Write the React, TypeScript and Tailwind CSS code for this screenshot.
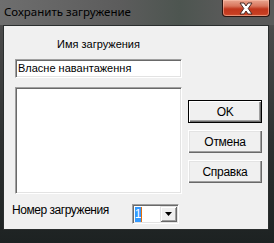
import React from "react";

const sunken =
  "border border-t-[#a0a0a0] border-l-[#a0a0a0] border-b-[#ffffff] border-r-[#ffffff] shadow-[inset_1px_1px_0_#696969,inset_-1px_-1px_0_#e3e3e3]";

function Btn({ label, def }: { label: string; def?: boolean }) {
  return (
    <div
      className={
        def
          ? "w-[74px] h-[23px] border border-[#000000] bg-[#f0f0f0] shadow-[inset_1px_1px_0_#ffffff,inset_-1px_-1px_0_#696969,inset_-2px_-2px_0_#a0a0a0] flex items-center justify-center text-black text-[12px] tracking-[-0.3px]"
          : "w-[74px] h-[23px] bg-[#f0f0f0] shadow-[inset_1px_1px_0_#ffffff,inset_-1px_-1px_0_#696969,inset_-2px_-2px_0_#a0a0a0,inset_2px_2px_0_#e3e3e3] flex items-center justify-center text-black text-[12px] tracking-[-0.3px]"
      }
    >
      {label}
    </div>
  );
}

export default function App() {
  return (
    <div
      className="w-[274px] h-[243px] flex flex-col overflow-hidden bg-[linear-gradient(180deg,#626262_0px,#4a4a4a_30px,#2e3131_140px,#1d2222_243px)]"
      style={{ fontFamily: '"Liberation Sans", Arial, sans-serif' }}
    >
      <div className="h-[25px] flex items-start relative bg-[linear-gradient(90deg,#6e6e6e_0px,#5c5c5c_120px,#4d5550_180px,#5a5a5a_230px)]">
        <div
          className="pl-[4px] pt-[4px] text-[11.5px] leading-[16px] text-black"
          style={{ fontFamily: '"Noto Sans", "Open Sans", sans-serif' }}
        >
          Сохранить загружение
        </div>
        <div className="ml-auto mr-[4px] w-[48px] h-[17px] rounded-b-[4px] border border-t-0 border-[#2a1410] bg-[linear-gradient(180deg,#e9a58f_0px,#d9765d_6px,#c0361c_9px,#c83e22_14px,#d96a45_17px)] flex items-center justify-center shadow-[inset_0_0_0_1px_rgba(255,200,180,0.5)]">
          <svg width="16" height="13" viewBox="0 0 16 13">
            <path
              d="M2 1 L6 1 L8 4 L10 1 L14 1 L10.2 6.5 L14 12 L10 12 L8 9 L6 12 L2 12 L5.8 6.5 Z"
              fill="#ffffff"
              stroke="#4a2a25"
              strokeWidth="1"
              strokeLinejoin="round"
            />
          </svg>
        </div>
      </div>
      <div className="ml-[3px] mr-[5px] h-[205px] border border-[#2a2e2e] bg-[#f0f0f0] flex flex-col text-[11px] text-black">
        <div className="flex">
          <div className="ml-[11px] mt-[12px] w-[167px] flex flex-col">
            <div className="h-[13px] leading-[13px] text-center">Имя загружения</div>
            <div className={"mt-[8px] h-[19px] bg-white flex items-center pl-[2px] " + sunken}>
              <span className="leading-[13px]">Власне навантаження</span>
            </div>
            <div className={"mt-[9px] h-[107px] bg-white " + sunken}></div>
          </div>
          <div className="ml-[6px] mt-[74px] flex flex-col gap-[7px]">
            <Btn label="OK" def />
            <Btn label="Отмена" />
            <Btn label="Справка" />
          </div>
        </div>
        <div className="flex items-start mt-[9px]">
          <div className="ml-[8px] w-[120px] leading-[14px] text-[12px] tracking-[-0.45px]">Номер загружения</div>
          <div className={"mt-[1px] w-[47px] h-[20px] bg-white flex items-center " + sunken}>
            <div className="ml-[2px] h-[15px] w-[6px] bg-[#3399ff] text-white text-[12px] leading-[15px] relative flex justify-center">
              1
              <div className="absolute right-[-1px] top-0 w-[1px] h-[15px] bg-[#e07010]"></div>
            </div>
            <div className="ml-auto mr-[1px] w-[17px] h-[16px] bg-[#f0f0f0] shadow-[inset_1px_1px_0_#e3e3e3,inset_-1px_-1px_0_#696969,inset_2px_2px_0_#ffffff,inset_-2px_-2px_0_#a0a0a0] flex items-center justify-center">
              <svg width="7" height="4" viewBox="0 0 7 4">
                <path d="M0 0 H7 L3.5 4 Z" fill="#000" />
              </svg>
            </div>
          </div>
        </div>
      </div>
    </div>
  );
}
